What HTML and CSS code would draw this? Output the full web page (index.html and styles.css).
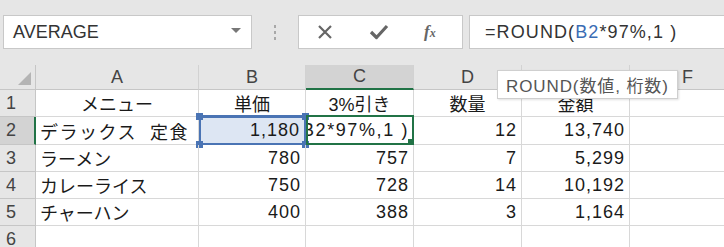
FILE: index.html
```html
<!DOCTYPE html>
<html lang="ja">
<head>
    <meta charset="UTF-8">
    <title>ROUND</title>
    <link rel="stylesheet" href="styles.css">
</head>
<body>
    <div class="toolbar">
        <div class="name-box">
            <span>AVERAGE</span>
            <span class="drop"></span>
        </div>
        <div class="grip"><i></i><i></i><i></i></div>
        <div class="buttons">
            <svg class="btn" width="20" height="20" viewBox="0 0 20 20"><path d="M4 4 L16 16 M16 4 L4 16" stroke="#666" stroke-width="2.2" fill="none"/></svg>
            <svg class="btn" width="22" height="20" viewBox="0 0 22 20"><path d="M3 10 L8.5 15.5 L19 4" stroke="#666" stroke-width="3.2" fill="none" stroke-linejoin="round"/></svg>
            <span class="fx">f<sub>x</sub></span>
        </div>
        <div class="formula">=ROUND(<span class="ref">B2</span>*97%,1 )</div>
    </div>

    <div class="sheet">
        <div class="corner"><span class="tri"></span></div>
        <div class="col">A</div>
        <div class="col">B</div>
        <div class="col active">C</div>
        <div class="col">D</div>
        <div class="col">E</div>
        <div class="col">F</div>

        <div class="row">1</div>
        <div class="cell center">メニュー</div>
        <div class="cell center">単価</div>
        <div class="cell center">3%引き</div>
        <div class="cell center">数量</div>
        <div class="cell center">金額</div>
        <div class="cell"></div>

        <div class="row active">2</div>
        <div class="cell wide">デラックス  定食</div>
        <div class="cell num ref-cell">1,180<i class="h tl"></i><i class="h tr"></i><i class="h bl"></i><i class="h br"></i></div>
        <div class="cell num edit"><span class="clip">=ROUND(B2*97%,1 )</span><i class="fill"></i></div>
        <div class="cell num">12</div>
        <div class="cell num">13,740</div>
        <div class="cell"></div>

        <div class="row">3</div>
        <div class="cell">ラーメン</div>
        <div class="cell num">780</div>
        <div class="cell num">757</div>
        <div class="cell num">7</div>
        <div class="cell num">5,299</div>
        <div class="cell"></div>

        <div class="row">4</div>
        <div class="cell">カレーライス</div>
        <div class="cell num">750</div>
        <div class="cell num">728</div>
        <div class="cell num">14</div>
        <div class="cell num">10,192</div>
        <div class="cell"></div>

        <div class="row">5</div>
        <div class="cell">チャーハン</div>
        <div class="cell num">400</div>
        <div class="cell num">388</div>
        <div class="cell num">3</div>
        <div class="cell num">1,164</div>
        <div class="cell"></div>

        <div class="row">6</div>
        <div class="cell"></div>
        <div class="cell"></div>
        <div class="cell"></div>
        <div class="cell"></div>
        <div class="cell"></div>
        <div class="cell"></div>

        <div class="tip">ROUND(数値, 桁数)</div>
    </div>
</body>
</html>
```

FILE: styles.css
```css
body {
    margin: 0;
    width: 724px;
    height: 247px;
    overflow: hidden;
    background-color: #e6e6e6;
    font-family: "Liberation Sans", "Noto Sans CJK JP", sans-serif;
    color: #222;
}
.toolbar {
    display: flex;
    align-items: center;
    height: 65px;
    padding-left: 3px;
    box-sizing: border-box;
}
.name-box {
    width: 249px;
    height: 34px;
    margin-top: -1px;
    box-sizing: border-box;
    background-color: #fff;
    border: 1px solid #c8c8c8;
    display: flex;
    align-items: center;
    justify-content: space-between;
    padding: 0 10px 0 9px;
    font-size: 18px;
    color: #333;
}
.drop {
    width: 0;
    height: 0;
    border-left: 5px solid transparent;
    border-right: 5px solid transparent;
    border-top: 5px solid #777;
    margin-top: -3px;
}
.grip {
    width: 46px;
    display: flex;
    flex-direction: column;
    align-items: center;
    gap: 3px;
    margin-top: -1px;
}
.grip i {
    width: 2px;
    height: 3px;
    background-color: #a8a8a8;
}
.buttons {
    width: 165px;
    height: 34px;
    margin-top: -1px;
    box-sizing: border-box;
    background-color: #fff;
    border: 1px solid #c8c8c8;
    display: flex;
    align-items: center;
    padding-left: 16px;
    gap: 33px;
}
.fx {
    font-family: "Liberation Serif", serif;
    font-style: italic;
    font-weight: bold;
    font-size: 17px;
    color: #666;
    margin-left: 1px;
}
.fx sub {
    font-size: 12px;
    vertical-align: 0;
}
.formula {
    flex: 1;
    height: 34px;
    margin: -1px 0 0 6px;
    box-sizing: border-box;
    background-color: #fff;
    border: 1px solid #c8c8c8;
    border-right: none;
    display: flex;
    align-items: center;
    padding-left: 15px;
    font-size: 18px;
    letter-spacing: 1.1px;
    color: #333;
    white-space: pre;
}
.ref {
    color: #3a6cb4;
}
.sheet {
    position: relative;
    width: 746px;
    display: grid;
    grid-template-columns: 36px 163px 107px 108px 108px 108px 116px;
    grid-template-rows: 25px 27px 28px 27px 27px 27px 27px;
    background-color: #fff;
    font-size: 18px;
}
.corner, .col, .row {
    background-color: #e6e6e6;
    border-right: 1px solid #c6c6c6;
    border-bottom: 1px solid #c6c6c6;
    color: #444;
    display: flex;
    align-items: center;
}
.corner {
    position: relative;
}
.tri {
    position: absolute;
    right: 4px;
    bottom: 4px;
    width: 0;
    height: 0;
    border-left: 13px solid transparent;
    border-bottom: 13px solid #b4b4b4;
}
.col {
    justify-content: center;
    border-right-color: #d2d2d2;
}
.row {
    padding-left: 6px;
}
.col.active {
    background-color: #d3d3d3;
    border-bottom: 2px solid #217346;
}
.row.active {
    background-color: #d3d3d3;
    border-right: 2px solid #217346;
}
.cell {
    position: relative;
    border-right: 1px solid #d8d8d8;
    border-bottom: 1px solid #d8d8d8;
    display: flex;
    align-items: center;
    padding: 0 4px;
    white-space: pre;
    color: #1a1a1a;
}
.wide {
    letter-spacing: 1.5px;
}
.center {
    justify-content: center;
}
.num {
    justify-content: flex-end;
    letter-spacing: 1px;
}
.ref-cell {
    background-color: #dde6f3;
    border: 2px solid #4a74b4;
    border-top-width: 3px;
    margin-top: -2px;
}
.h {
    position: absolute;
    width: 7px;
    height: 7px;
    background-color: #4a74b4;
}
.tl { left: -5px; top: -5px; }
.tr { right: -5px; top: -5px; }
.bl { left: -5px; bottom: -5px; }
.br { right: -5px; bottom: -5px; }
.edit {
    border: 2px solid #217346;
    margin-top: -2px;
    overflow: hidden;
    padding-right: 3px;
    letter-spacing: 1.6px;
}
.clip {
    display: block;
}
.fill {
    position: absolute;
    right: -3px;
    bottom: -3px;
    width: 6px;
    height: 6px;
    background-color: #217346;
    border: 1px solid #fff;
}
.tip {
    position: absolute;
    left: 497px;
    top: 5px;
    height: 27px;
    padding: 0 8px 0 8px;
    background-color: #fff;
    border: 1px solid #cfcfcf;
    box-shadow: 1px 1px 2px rgba(0, 0, 0, 0.12);
    display: flex;
    align-items: center;
    font-size: 17px;
    letter-spacing: 0.9px;
    color: #555;
}
```
